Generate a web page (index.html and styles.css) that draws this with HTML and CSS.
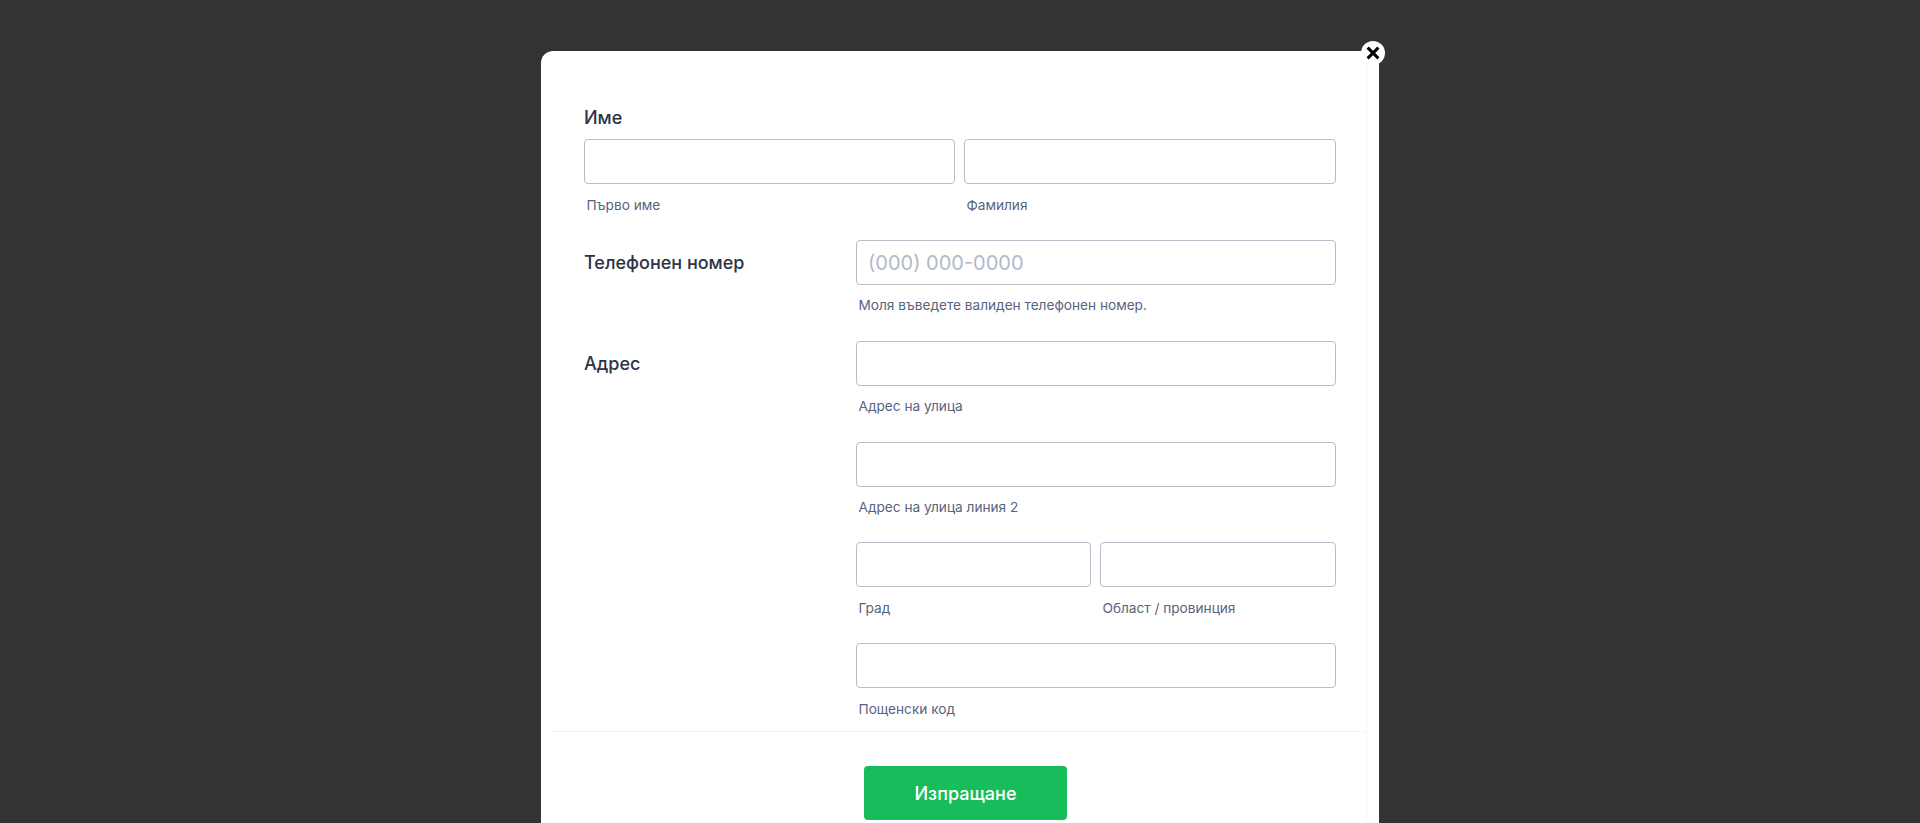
FILE: index.html
```html
<!DOCTYPE html>
<html lang="bg">
<head>
<meta charset="utf-8">
<title>Форма</title>
<link rel="stylesheet" href="styles.css">
</head>
<body>
<div class="modal">
  <button class="close" type="button" aria-label="Затвори">
    <svg viewBox="0 0 14 14" width="14" height="14"><path d="M1.6 1.6L12.4 12.4M12.4 1.6L1.6 12.4" fill="none" stroke="#000" stroke-width="3"/></svg>
  </button>
  <div class="panel">
    <form class="form">
      <div class="field name-field">
        <label class="label label-top">Име</label>
        <div class="pair">
          <div class="cell"><input class="input" type="text"><span class="sub">Първо име</span></div>
          <div class="cell"><input class="input" type="text"><span class="sub">Фамилия</span></div>
        </div>
      </div>
      <div class="field side">
        <label class="label label-side">Телефонен номер</label>
        <div class="cell"><input class="input" type="text" placeholder="(000) 000-0000"><span class="sub">Моля въведете валиден телефонен номер.</span></div>
      </div>
      <div class="field side">
        <label class="label label-side">Адрес</label>
        <div class="stack">
          <div class="cell"><input class="input" type="text"><span class="sub">Адрес на улица</span></div>
          <div class="cell"><input class="input" type="text"><span class="sub">Адрес на улица линия 2</span></div>
          <div class="pair">
            <div class="cell"><input class="input" type="text"><span class="sub">Град</span></div>
            <div class="cell"><input class="input" type="text"><span class="sub">Област / провинция</span></div>
          </div>
          <div class="cell"><input class="input" type="text"><span class="sub">Пощенски код</span></div>
        </div>
      </div>
    </form>
    <div class="actions"><button class="submit" type="button">Изпращане</button></div>
  </div>
</div>
</body>
</html>
```
FILE: styles.css
```css
* { box-sizing: border-box; }
html, body { height: 100%; }
body {
  margin: 0;
  background: #333333;
  overflow: hidden;
  font-family: Inter, "Liberation Sans", sans-serif;
  color: #2c3345;
}
.modal {
  position: relative;
  width: 838px;
  height: 772px;
  margin: 51px 0 0 541px;
  background: #fff;
  border-radius: 12px 12px 0 0;
  padding-left: 11px;
  padding-right: 12px;
}
.close {
  position: absolute;
  top: -10px;
  right: -6px;
  width: 24px;
  height: 24px;
  padding: 0;
  border: 0;
  border-radius: 50%;
  background: #fff;
  display: flex;
  align-items: center;
  justify-content: center;
}
.panel {
  height: 100%;
  border-right: 1px solid #f3f3fe;
}
.form {
  height: 681px;
  padding: 54px 30px 0 32px;
  border-bottom: 1px solid #f3f3fe;
  display: flex;
  flex-direction: column;
}
.field { display: flex; }
.name-field { flex-direction: column; }
.label {
  font-size: 18px;
  font-weight: 500;
  line-height: 22px;
  color: #2c3345;
}
.label-top { margin-bottom: 10px; padding-top: 2px; }
.label-side { width: 272px; flex: none; padding-top: 12px; }
.pair {
  display: grid;
  grid-template-columns: calc(50% - 5px) 1fr;
  column-gap: 9px;
}
.stack { flex: 1; display: flex; flex-direction: column; }
.cell { display: flex; flex-direction: column; height: 101px; min-width: 0; flex: 1; }
.stack > .cell, .stack > .pair { flex: none; height: 100.7px; }
.input {
  width: 100%;
  height: 45px;
  flex: none;
  border: 1px solid #b8bdc9;
  border-radius: 4px;
  background: #fff;
  padding: 0 11px;
  font: 400 20px Inter, "Liberation Sans", sans-serif;
  color: #2c3345;
}
.input::placeholder { color: #b3b9c8; opacity: 1; }
.sub {
  margin-top: 11.45px;
  padding-left: 2.5px;
  font-size: 13.65px;
  line-height: 18px;
  color: #57647e;
}
.name-field .sub { margin-top: 12px; }
.actions {
  display: flex;
  justify-content: flex-start;
  padding: 34px 0 0 312px;
}
.submit {
  width: 203px;
  height: 54px;
  border: 0;
  border-radius: 4px;
  background: #18bd5b;
  color: #fff;
  font: 500 18px Inter, "Liberation Sans", sans-serif;
}
```
